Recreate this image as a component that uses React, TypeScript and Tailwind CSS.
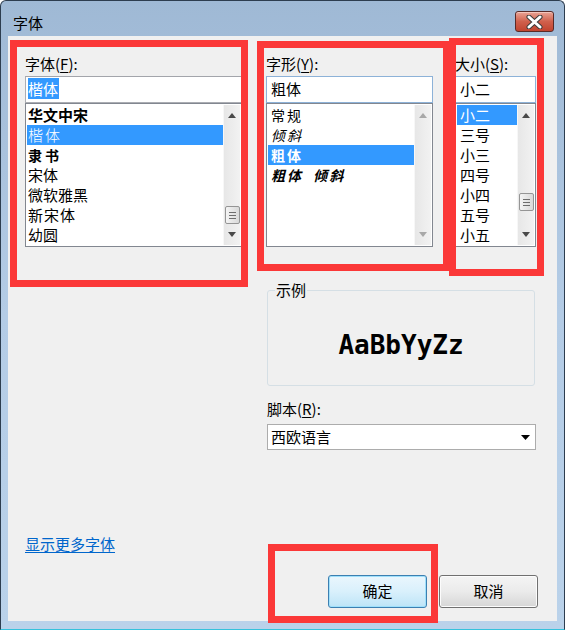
import React from "react";

const FONT = `"Microsoft YaHei", "Noto Sans CJK SC", "Noto Sans", sans-serif`;

type Item = { label: string; cls?: string };

const FONTS: Item[] = [
  { label: "华文中宋", cls: "font-semibold" },
  { label: "楷体", cls: "font-light tracking-[2px]" },
  { label: "隶书", cls: "font-bold text-[14px] tracking-[3px]" },
  { label: "宋体" },
  { label: "微软雅黑" },
  { label: "新宋体", cls: "tracking-[1px]" },
  { label: "幼圆" },
];

const STYLES: Item[] = [
  { label: "常规", cls: "tracking-[2px] text-[14px]" },
  { label: "倾斜", cls: "italic tracking-[2px] text-[14px]" },
  { label: "粗体", cls: "font-bold tracking-[2px] text-[14px]" },
  { label: "粗体  倾斜", cls: "font-bold italic tracking-[2px] text-[14px] whitespace-pre" },
];

const SIZES: Item[] = [
  { label: "小二" },
  { label: "三号" },
  { label: "小三" },
  { label: "四号" },
  { label: "小四" },
  { label: "五号" },
  { label: "小五" },
];

function Arrow({ up, disabled }: { up?: boolean; disabled?: boolean }) {
  const fill = disabled ? "#a8a8a8" : "#4a4a4a";
  return (
    <svg width="8" height="5" viewBox="0 0 8 5">
      {up ? <polygon points="0,5 8,5 4,0" fill={fill} /> : <polygon points="0,0 8,0 4,5" fill={fill} />}
    </svg>
  );
}

function ScrollBar({ thumbClass, disabled }: { thumbClass?: string; disabled?: boolean }) {
  return (
    <div className="flex w-[17px] shrink-0 flex-col border-l border-[#f7f7f7] bg-gradient-to-r from-[#e7e7e7] to-[#f2f2f2]">
      <div className="flex h-[21px] items-center justify-center">
        <Arrow up disabled={disabled} />
      </div>
      <div className="flex-1">
        {thumbClass && (
          <div
            className={`${thumbClass} ml-[1px] flex h-[18px] w-[15px] flex-col items-center justify-center gap-[2px] rounded-[2px] border border-[#959595] bg-gradient-to-r from-[#f4f4f4] to-[#d9d9d9]`}
          >
            <div className="h-px w-[7px] bg-[#6d6d6d]" />
            <div className="h-px w-[7px] bg-[#6d6d6d]" />
            <div className="h-px w-[7px] bg-[#6d6d6d]" />
          </div>
        )}
      </div>
      <div className="flex h-[21px] items-center justify-center">
        <Arrow disabled={disabled} />
      </div>
    </div>
  );
}

function Column({
  label,
  hotkey,
  value,
  items,
  selected,
  inputBorder,
  valueSelected,
  indent,
  thumbClass,
  disabled,
  widthClass,
}: {
  label: string;
  hotkey: string;
  value: string;
  items: Item[];
  selected: number;
  inputBorder: string;
  valueSelected?: boolean;
  indent: string;
  thumbClass?: string;
  disabled?: boolean;
  widthClass: string;
}) {
  return (
    <div className={`flex shrink-0 flex-col ${widthClass}`}>
      <div className="h-[18px] leading-[18px] text-black">
        {label}(<span className="underline underline-offset-2">{hotkey}</span>):
      </div>
      <div className={`mt-[3px] h-[27px] border bg-white pl-[2px] pt-[1px] ${inputBorder}`}>
        <span
          className={`inline-block leading-[21px] ${valueSelected ? "bg-[#3399ff] pr-[1px] text-white" : "pl-[2px] text-black"}`}
        >
          {value}
        </span>
      </div>
      <div className="flex h-[144px] border border-[#828790] bg-white p-px">
        <div className="flex-1">
          {items.map((it, i) => (
            <div
              key={it.label}
              className={`h-[20px] leading-[20px] ${indent} ${it.cls ?? ""} ${
                i === selected ? "bg-[#3399ff] text-white" : "text-black"
              }`}
            >
              {it.label}
            </div>
          ))}
        </div>
        <ScrollBar thumbClass={thumbClass} disabled={disabled} />
      </div>
    </div>
  );
}

function CloseButton() {
  return (
    <div className="mr-[10px] mt-[10px] flex h-[21px] w-[39px] items-center justify-center rounded-[3px] border border-[#5a2a27] bg-gradient-to-b from-[#e9a395] via-[#d0604c] to-[#c1432f] shadow-[inset_0_1px_0_#f3c4bb]">
      <svg width="17" height="14" viewBox="0 0 17 14">
        <path d="M3 2 L14 12 M14 2 L3 12" stroke="#3b3b3b" strokeWidth="5" strokeLinecap="round" />
        <path d="M3 2 L14 12 M14 2 L3 12" stroke="#ffffff" strokeWidth="3" strokeLinecap="round" />
      </svg>
    </div>
  );
}

function Button({ children, primary }: { children: React.ReactNode; primary?: boolean }) {
  return (
    <div
      className={`flex h-[33px] w-[99px] items-center justify-center rounded-[3px] border text-black ${
        primary
          ? "border-[#3c7fb1] bg-gradient-to-b from-[#eaf6fd] via-[#d9f0fc] to-[#bde4f7] shadow-[inset_0_0_0_1px_#9fe0fb]"
          : "border-[#707070] bg-gradient-to-b from-[#f4f4f4] via-[#ebebeb] to-[#d6d6d6] shadow-[inset_0_0_0_1px_#fcfcfc]"
      }`}
    >
      {children}
    </div>
  );
}

export default function App() {
  return (
    <div
      className="relative flex h-[630px] w-[565px] flex-col overflow-hidden rounded-t-[6px] border-x border-t border-b border-[#2d3d4f] border-b-[#35c2dc] bg-gradient-to-b from-[#9fb9d5] via-[#b4cce6] to-[#bad2ea] text-[15px]"
      style={{ fontFamily: FONT }}
    >
      {/* title bar */}
      <div className="flex h-[35px] shrink-0 items-start justify-between pl-[12px]">
        <div className="mt-[13px] leading-[18px] text-black">字体</div>
        <CloseButton />
      </div>

      {/* client */}
      <div className="mx-[7px] mb-[8px] flex flex-1 flex-col bg-[#f0f0f0]">
        <div className="flex pl-[17px] pt-[19px]">
          <Column
            widthClass="w-[217px]"
            label="字体"
            hotkey="F"
            value="楷体"
            valueSelected
            items={FONTS}
            selected={1}
            inputBorder="border-[#abadb3] border-t-[#a3a5ab]"
            indent="pl-px"
            thumbClass="mt-[80px]"
          />
          <div className="ml-[24px]">
            <Column
              widthClass="w-[167px]"
              label="字形"
              hotkey="Y"
              value="粗体"
              items={STYLES}
              selected={2}
              inputBorder="border-[#8db2d8]"
              indent="pl-[3px]"
              disabled
            />
          </div>
          <div className="ml-[22px]">
            <Column
              widthClass="w-[81px]"
              label="大小"
              hotkey="S"
              value="小二"
              items={SIZES}
              selected={0}
              inputBorder="border-[#8db2d8]"
              indent="pl-[3px]"
              thumbClass="mt-[67px]"
            />
          </div>
        </div>

        <div className="ml-[259px] mt-[34px] flex w-[269px] flex-col">
          <fieldset className="h-[105px] w-[268px] rounded-[3px] border border-[#d5dfe5]">
            <legend className="ml-[7px] px-[1px] leading-[18px] text-black">示例</legend>
            <div
              className="pt-[31px] text-center text-[26px] font-bold leading-[30px] text-black"
              style={{ fontFamily: `"DejaVu Sans Mono", monospace` }}
            >
              AaBbYyZz
            </div>
          </fieldset>
          <div className="mt-[14px] h-[18px] leading-[18px] text-black">
            脚本(<span className="underline underline-offset-2">R</span>):
          </div>
          <div className="mt-[6px] flex h-[26px] items-center justify-between border border-[#acacac] bg-white pl-[3px] pr-[5px] text-black">
            <span className="leading-[20px]">西欧语言</span>
            <svg width="9" height="5" viewBox="0 0 9 5">
              <polygon points="0,0 9,0 4.5,5" fill="#000" />
            </svg>
          </div>
        </div>

        <div className="mt-auto flex flex-col pb-[13px]">
          <div className="pl-[17px] leading-[20px]">
            <span className="text-[#0066cc] underline underline-offset-2">显示更多字体</span>
          </div>
          <div className="mt-[21px] flex justify-end gap-[12px] pr-[19px]">
            <Button primary>确定</Button>
            <Button>取消</Button>
          </div>
        </div>
      </div>

      {/* red annotation boxes */}
      <div className="pointer-events-none absolute left-[9px] top-[39px] h-[247px] w-[238px] border-[7px] border-[#fb3838]" />
      <div className="pointer-events-none absolute left-[256px] top-[40px] h-[230px] w-[193px] border-[7px] border-[#fb3838]" />
      <div className="pointer-events-none absolute left-[448px] top-[37px] h-[238px] w-[95px] border-[7px] border-[#fb3838]" />
      <div className="pointer-events-none absolute left-[267px] top-[543px] h-[79px] w-[170px] border-[7px] border-[#fb3838]" />
    </div>
  );
}
